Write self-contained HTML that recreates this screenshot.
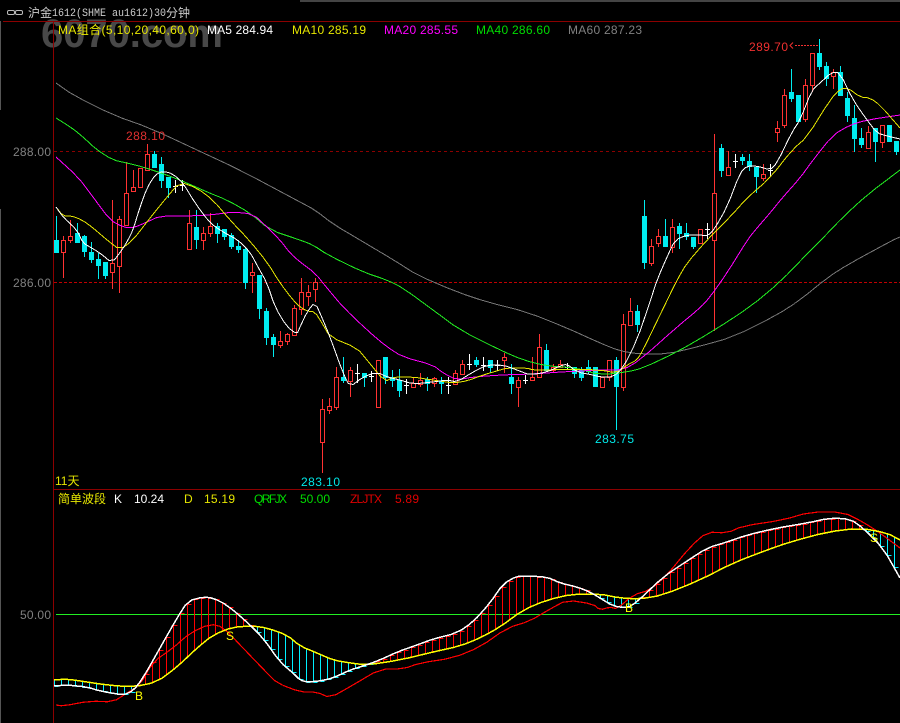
<!DOCTYPE html>
<html><head><meta charset="utf-8"><style>
html,body{margin:0;padding:0;background:#000;width:900px;height:723px;overflow:hidden}
svg{display:block;position:absolute;left:0;top:0}
text{font-family:"Liberation Sans","Noto Sans CJK SC",sans-serif;font-size:12px;dominant-baseline:auto}
.m{font-family:"Liberation Mono","Noto Sans CJK SC",monospace}
</style></head><body>
<svg id="s" width="900" height="723" viewBox="0 0 900 723" xmlns="http://www.w3.org/2000/svg">
<rect width="900" height="723" fill="#000"/>
<rect x="300" y="0" width="600" height="2" fill="#444"/>
<rect x="0" y="21" width="1" height="89" fill="#555"/>
<rect x="0" y="209" width="1" height="514" fill="#555"/>
<text x="41" y="47" fill="#484848" textLength="182" style="font-size:40px;font-weight:bold">6070.com</text>
<rect x="3" y="21" width="897" height="1" fill="#8c0000"/>
<rect x="53" y="21" width="1" height="702" fill="#8c0000"/>
<rect x="53" y="489" width="847" height="1" fill="#8c0000"/>
<path d="M54 151.5H900" stroke="#8c0000" stroke-dasharray="3 3" fill="none"/>
<path d="M54 282.5H900" stroke="#c00000" stroke-dasharray="3 2" fill="none"/>
<path d="M56 614.5H900" stroke="#22ee22" fill="none"/>
<rect x="7.5" y="10.5" width="7" height="4" rx="1.5" fill="none" stroke="#bbb"/>
<rect x="15.5" y="10.5" width="7" height="4" rx="1.5" fill="none" stroke="#bbb"/>
<text x="28" y="17" fill="#ccc">沪金</text>
<text class="m" x="52" y="16" fill="#ccc" textLength="114" lengthAdjust="spacingAndGlyphs" style="font-size:11px">1612(SHME au1612)30</text>
<text x="166" y="17" fill="#ccc">分钟</text>
<g id="c"></g>
<g id="l"></g>
<text x="58" y="34" fill="#e6e600" textLength="141">MA组合(5,10,20,40,60,0)</text>
<text x="207" y="34" fill="#fff" textLength="66">MA5 284.94</text>
<text x="292" y="34" fill="#e6e600" textLength="74">MA10 285.19</text>
<text x="384" y="34" fill="#f0f" textLength="74">MA20 285.55</text>
<text x="476" y="34" fill="#0d0" textLength="74">MA40 286.60</text>
<text x="568" y="34" fill="#808080" textLength="74">MA60 287.23</text>
<text x="13" y="156" fill="#808080" textLength="38">288.00</text>
<text x="13" y="287" fill="#808080" textLength="38">286.00</text>
<text x="20" y="619" fill="#808080" textLength="31">50.00</text>
<text x="126" y="140" fill="#e03030" textLength="39">288.10</text>
<text x="749" y="51" fill="#f03030" textLength="39">289.70</text>
<path d="M795 45.5H818" stroke="#f03030" stroke-dasharray="2 1" fill="none"/>
<path d="M793 42.5L790 45.5L793 48.5" stroke="#f03030" fill="none"/>
<text x="301" y="486" fill="#00e8e8" textLength="39">283.10</text>
<text x="595" y="443" fill="#00e8e8" textLength="39">283.75</text>
<text x="55" y="485" fill="#e6e600">11天</text>
<text x="58" y="503" fill="#e6e600">简单波段</text>
<text x="114" y="503" fill="#fff">K</text>
<text x="134" y="503" fill="#fff" textLength="30">10.24</text>
<text x="184" y="503" fill="#e6e600">D</text>
<text x="204" y="503" fill="#e6e600" textLength="31">15.19</text>
<text x="254" y="503" fill="#0d0" textLength="33">QRFJX</text>
<text x="300" y="503" fill="#0d0" textLength="30">50.00</text>
<text x="350" y="503" fill="#e00000" textLength="32">ZLJTX</text>
<text x="395" y="503" fill="#e00000" textLength="24">5.89</text>
<text x="135" y="700" fill="#ff0">B</text>
<text x="226" y="640" fill="#ff0">S</text>
<text x="625" y="612" fill="#ff0">B</text>
<text x="870" y="542" fill="#ff0">S</text>
</svg>
<script>
var C=[[1,216,240,253,253],[0,236,240,252,278],[0,220,236,240,243],[1,223,233,243,243],[1,235,236,252,257],[1,242,252,260,263],[1,253,259,266,279],[1,262,262,276,279],[0,200,263,272,289],[0,216,219,266,293],[0,162,193,225,226],[0,170,187,191,191],[0,168,168,187,187],[0,144,154,170,170],[1,151,154,168,168],[1,157,164,181,188],[1,177,177,188,198],[2,180,186,193],[2,180,185,191],[0,210,223,249,249],[1,210,227,240,249],[0,227,233,240,250],[0,213,226,233,237],[1,223,226,234,243],[1,229,229,237,240],[1,233,235,247,249],[1,240,246,250,253],[1,248,249,283,289],[0,263,272,275,293],[1,275,275,309,319],[1,308,311,338,345],[1,334,337,345,357],[0,331,341,345,348],[0,333,334,341,345],[0,305,308,335,335],[0,278,292,309,315],[0,285,292,296,306],[0,278,282,289,302],[0,399,409,442,473],[0,398,406,410,414],[0,367,377,407,410],[1,357,377,381,383],[0,367,370,381,397],[2,364,373,383],[1,373,373,378,387],[2,371,376,382],[0,360,360,407,407],[1,357,357,378,384],[1,370,377,381,387],[1,369,380,391,397],[2,379,385,394],[0,377,383,387,387],[0,373,380,384,387],[1,377,379,384,391],[0,377,378,383,387],[1,377,381,384,394],[2,377,385,394],[0,370,373,384,384],[0,360,364,374,374],[2,354,364,370],[1,357,360,365,367],[2,357,365,371],[1,360,360,368,373],[2,360,365,371],[0,353,357,360,373],[1,364,377,384,394],[0,377,380,387,407],[2,375,380,384],[0,357,377,380,380],[0,334,347,377,377],[1,344,350,371,371],[0,364,367,370,373],[0,360,364,367,367],[2,363,367,370],[1,367,367,374,378],[1,367,370,378,381],[1,360,367,372,374],[1,367,367,387,387],[0,377,377,387,387],[0,360,360,377,381],[1,357,360,387,430],[0,314,324,387,391],[0,298,311,325,325],[1,305,311,325,332],[1,200,216,263,269],[0,239,246,263,266],[0,229,236,243,247],[1,219,236,247,247],[0,219,227,247,253],[1,223,226,234,249],[1,223,233,237,240],[1,237,237,247,249],[0,229,229,243,243],[2,223,229,239],[0,134,193,240,331],[1,144,148,171,177],[0,151,167,175,175],[2,154,161,168],[1,154,157,161,165],[1,154,161,167,171],[1,167,167,177,193],[0,164,174,178,181],[2,164,170,177],[0,121,128,132,142],[0,89,95,125,128],[1,69,92,99,102],[1,95,95,122,122],[0,79,85,119,122],[0,53,53,85,92],[1,39,53,67,70],[1,62,66,79,86],[0,69,72,76,89],[1,66,72,96,96],[1,92,98,116,122],[1,105,118,139,152],[1,128,138,145,148],[0,126,132,148,148],[1,128,128,142,162],[0,125,125,142,148],[1,125,125,142,142],[1,141,141,152,155]];
var h="";
var R="#ff3232",Y="#00ecf0";
C.forEach(function(c,i){var x=56+7*i,m=x+.5;
 if(c[0]==2){h+='<path shape-rendering="crispEdges" d="M'+m+' '+c[1]+'V'+c[3]+'M'+(x-2)+' '+(c[2]+.5)+'H'+(x+3)+'" stroke="#fff" fill="none"/>';return}
 if(c[0]==0){h+='<path shape-rendering="crispEdges" d="M'+m+' '+c[1]+'V'+c[2]+'M'+m+' '+c[3]+'V'+c[4]+'" stroke="'+R+'" fill="none"/><rect shape-rendering="crispEdges" x="'+(x-1.5)+'" y="'+(c[2]+.5)+'" width="4" height="'+(c[3]-c[2])+'" fill="#000" stroke="'+R+'"/>';}
 else{h+='<path shape-rendering="crispEdges" d="M'+m+' '+c[1]+'V'+c[4]+'" stroke="'+Y+'" fill="none"/><rect shape-rendering="crispEdges" x="'+(x-2)+'" y="'+c[2]+'" width="5" height="'+(c[3]-c[2])+'" fill="'+Y+'"/>';}
});
document.getElementById("c").innerHTML=h;
var W="56,207 63,217 77,230 83,243 90,247 100,253 112,263 122,250 128,240 133,230 140,207 147,188 155,175 163,171 173,174 183,183 195,203 210,223 223,232 238,240 250,252 258,267 267,283 275,307 287,327 297,334 300,327 307,312 315,302 323,320 330,337 343,373 350,387 363,377 377,372 387,377 400,380 413,384 433,382 447,380 457,382 473,372 487,365 503,365 517,370 530,375 547,372 560,366 567,364 577,372 593,375 600,377 613,377 623,368 637,340 650,302 657,280 667,257 675,240 687,235 700,235 708,236 715,228 727,207 740,173 747,166 757,166 770,170 777,163 792,132 800,120 812,90 820,83 832,72 840,73 853,100 867,120 877,133 887,136 900,139";
var Ye="56,207 63,216 72,216 82,220 92,227 107,240 120,250 133,240 150,218 167,197 180,182 197,188 213,200 230,220 249,240 267,262 280,283 293,300 300,307 307,311 315,312 322,323 330,337 357,348 367,360 385,382 393,377 413,377 433,380 453,383 467,381 483,375 500,370 507,368 527,368 533,370 547,370 567,369 600,370 617,373 627,365 637,360 643,350 660,315 677,280 687,263 707,240 730,217 747,198 770,178 792,150 807,137 830,100 840,89 848,88 860,97 870,98 880,105 900,128";
var Mg="56,157 78,177 93,197 110,220 123,227 133,228 147,222 160,216 187,216 210,215 233,212 253,214 267,227 280,240 290,253 300,262 315,273 327,288 343,307 367,330 387,347 403,357 433,365 443,373 457,380 473,377 500,375 533,374 560,372 600,370 623,370 640,360 677,327 700,308 710,297 727,273 748,239 757,228 770,213 783,197 800,178 813,160 833,135 850,125 867,120 900,115";
var Gr="56,118 72,128 83,137 97,150 113,160 127,163 143,167 167,175 187,183 207,192 227,200 250,213 270,230 300,240 313,245 328,255 363,272 387,280 403,288 433,310 460,330 500,350 523,360 547,366 577,368 600,375 627,372 643,368 677,352 713,331 750,307 780,282 808,253 822,239 843,217 867,195 900,170";
var Gy="56,83 73,95 113,115 150,128 197,150 240,170 300,202 315,210 333,224 360,240 397,262 417,275 457,292 487,302 527,312 567,328 600,343 620,351 640,354 667,354 697,347 733,337 777,315 800,300 827,278 847,265 893,240 900,237";
var K="54,686 67,685 87,687 100,691 123,695 133,691 143,678 160,648 177,618 188,601 203,597 213,598 227,605 247,622 263,638 280,662 293,673 300,680 307,682 320,681 333,678 350,670 363,666 380,660 397,652 417,645 433,639 457,633 473,622 490,603 503,584 517,576 527,576 547,577 560,583 577,587 590,592 600,598 613,606 627,608 637,602 663,577 687,561 707,548 727,542 747,535 777,528 807,523 830,518 850,519 863,528 883,548 900,578";
var D="54,680 67,679 87,682 107,685 133,687 157,682 177,667 197,648 213,635 233,627 253,626 267,628 287,635 300,646 317,653 333,660 350,663 367,665 400,660 433,652 460,646 480,638 500,627 523,610 547,600 573,594 600,594 620,598 640,599 663,595 700,580 733,563 767,550 790,542 827,532 860,528 887,533 900,540";
var Z="56,705 63,706 90,701 113,702 127,693 140,685 153,662 173,648 190,633 210,624 223,627 243,648 267,673 277,683 300,692 317,692 330,698 353,685 380,669 403,669 420,663 453,658 480,647 507,628 530,621 550,609 567,600 593,604 600,610 610,607 617,609 633,595 650,590 667,575 690,547 707,532 727,533 743,526 783,520 810,512 843,512 863,522 880,533 900,548";
function pts(s){return s.split(" ").map(function(p){return p.split(",").map(Number)})}
function sm(a){var r=[a[0]];for(var i=0;i<a.length-1;i++){var p=a[i],q=a[i+1];r.push([p[0]*.75+q[0]*.25,p[1]*.75+q[1]*.25]);r.push([p[0]*.25+q[0]*.75,p[1]*.25+q[1]*.75]);}r.push(a[a.length-1]);return r}
function at(a,x){for(var i=1;i<a.length;i++){if(x<=a[i][0]){var t=(x-a[i-1][0])/(a[i][0]-a[i-1][0]);return a[i-1][1]+t*(a[i][1]-a[i-1][1])}}return a[a.length-1][1]}
var k=sm(pts(K)),d=sm(pts(D)),z=sm(pts(Z)),o="";
for(var x=54;x<900;x+=7){var a=Math.round(at(k,x)),b=Math.round(at(d,x));var col=a<b?"#f00":"#00f0ff";
 o+='<path shape-rendering="crispEdges" d="M'+(x+.5)+' '+Math.min(a,b)+'V'+Math.max(a,b)+'M'+(x+.5)+' '+(a+.5)+'h4" stroke="'+col+'" fill="none"/>';}
function pl(s,c,w){var t=typeof s=="string"?s:s.map(function(p){return p.join(",")}).join(" ");return '<polyline shape-rendering="crispEdges" points="'+t+'" fill="none" stroke="'+c+'" stroke-width="'+w+'"/>'}
o+=pl(sm(pts(Gy)),"#777",1)+pl(sm(pts(Gr)),"#22ee22",1)+pl(sm(pts(Mg)),"#f0f",1)+pl(sm(pts(Ye)),"#e6e600",1)+pl(sm(pts(W)),"#fff",1);
o+=pl(z,"#f00",1.2)+pl(d,"#ff0",1.5)+pl(k,"#fff",1.5);
document.getElementById("l").innerHTML=o;
</script>
</body></html>
